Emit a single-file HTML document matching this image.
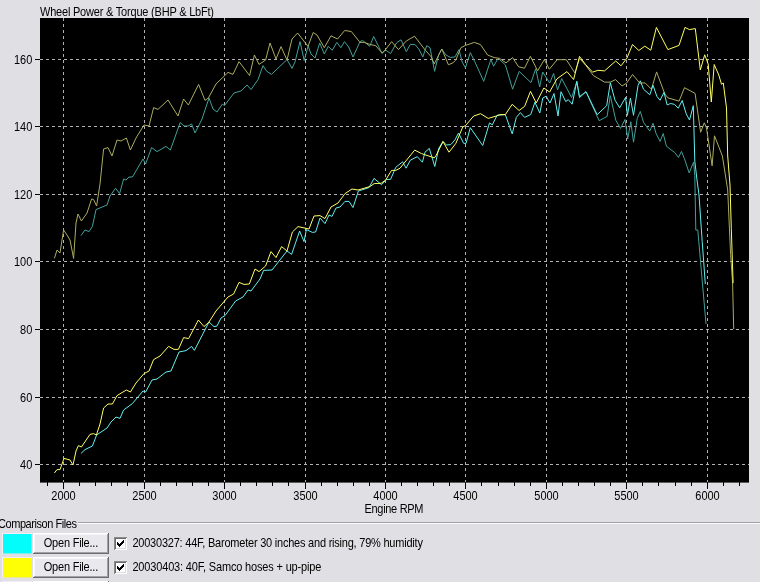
<!DOCTYPE html>
<html><head><meta charset="utf-8"><title>Wheel Power &amp; Torque</title>
<style>
html,body{margin:0;padding:0;}
body{width:760px;height:582px;overflow:hidden;background:#e0dfe3;}
svg{display:block;will-change:transform;}
svg text{font-family:"Liberation Sans",sans-serif;font-size:11px;fill:#000;}
</style></head><body>
<svg width="760" height="582" viewBox="0 0 760 582">
<rect x="40" y="18" width="709" height="464.6" fill="#000"/>
<g stroke="#b4b0b2" stroke-width="1" stroke-dasharray="3 3" fill="none" shape-rendering="crispEdges">
<line x1="63.5" y1="18" x2="63.5" y2="482.5"/>
<line x1="144.5" y1="18" x2="144.5" y2="482.5"/>
<line x1="224.5" y1="18" x2="224.5" y2="482.5"/>
<line x1="305.5" y1="18" x2="305.5" y2="482.5"/>
<line x1="385.5" y1="18" x2="385.5" y2="482.5"/>
<line x1="465.5" y1="18" x2="465.5" y2="482.5"/>
<line x1="546.5" y1="18" x2="546.5" y2="482.5"/>
<line x1="626.5" y1="18" x2="626.5" y2="482.5"/>
<line x1="707.5" y1="18" x2="707.5" y2="482.5"/>
<line x1="40" y1="59.5" x2="749" y2="59.5"/>
<line x1="40" y1="126.5" x2="749" y2="126.5"/>
<line x1="40" y1="194.5" x2="749" y2="194.5"/>
<line x1="40" y1="261.5" x2="749" y2="261.5"/>
<line x1="40" y1="329.5" x2="749" y2="329.5"/>
<line x1="40" y1="397.5" x2="749" y2="397.5"/>
<line x1="40" y1="464.5" x2="749" y2="464.5"/>
</g>
<g fill="#000" shape-rendering="crispEdges">
<rect x="47" y="482" width="1" height="3.7"/>
<rect x="63" y="482" width="1" height="6.7"/>
<rect x="79" y="482" width="1" height="3.7"/>
<rect x="95" y="482" width="1" height="3.7"/>
<rect x="111" y="482" width="1" height="3.7"/>
<rect x="127" y="482" width="1" height="3.7"/>
<rect x="144" y="482" width="1" height="6.7"/>
<rect x="160" y="482" width="1" height="3.7"/>
<rect x="176" y="482" width="1" height="3.7"/>
<rect x="192" y="482" width="1" height="3.7"/>
<rect x="208" y="482" width="1" height="3.7"/>
<rect x="224" y="482" width="1" height="6.7"/>
<rect x="240" y="482" width="1" height="3.7"/>
<rect x="256" y="482" width="1" height="3.7"/>
<rect x="272" y="482" width="1" height="3.7"/>
<rect x="288" y="482" width="1" height="3.7"/>
<rect x="305" y="482" width="1" height="6.7"/>
<rect x="321" y="482" width="1" height="3.7"/>
<rect x="337" y="482" width="1" height="3.7"/>
<rect x="353" y="482" width="1" height="3.7"/>
<rect x="369" y="482" width="1" height="3.7"/>
<rect x="385" y="482" width="1" height="6.7"/>
<rect x="401" y="482" width="1" height="3.7"/>
<rect x="417" y="482" width="1" height="3.7"/>
<rect x="433" y="482" width="1" height="3.7"/>
<rect x="449" y="482" width="1" height="3.7"/>
<rect x="465" y="482" width="1" height="6.7"/>
<rect x="481" y="482" width="1" height="3.7"/>
<rect x="498" y="482" width="1" height="3.7"/>
<rect x="514" y="482" width="1" height="3.7"/>
<rect x="530" y="482" width="1" height="3.7"/>
<rect x="546" y="482" width="1" height="6.7"/>
<rect x="562" y="482" width="1" height="3.7"/>
<rect x="578" y="482" width="1" height="3.7"/>
<rect x="594" y="482" width="1" height="3.7"/>
<rect x="610" y="482" width="1" height="3.7"/>
<rect x="626" y="482" width="1" height="6.7"/>
<rect x="642" y="482" width="1" height="3.7"/>
<rect x="658" y="482" width="1" height="3.7"/>
<rect x="675" y="482" width="1" height="3.7"/>
<rect x="691" y="482" width="1" height="3.7"/>
<rect x="707" y="482" width="1" height="6.7"/>
<rect x="723" y="482" width="1" height="3.7"/>
<rect x="739" y="482" width="1" height="3.7"/>
<rect x="35" y="59" width="5" height="1"/>
<rect x="35" y="126" width="5" height="1"/>
<rect x="35" y="194" width="5" height="1"/>
<rect x="35" y="261" width="5" height="1"/>
<rect x="35" y="329" width="5" height="1"/>
<rect x="35" y="397" width="5" height="1"/>
<rect x="35" y="464" width="5" height="1"/>
</g>
<g>
<text transform="translate(63.5,500) scale(1,1.125)" text-anchor="middle">2000</text>
<text transform="translate(144.5,500) scale(1,1.125)" text-anchor="middle">2500</text>
<text transform="translate(224.5,500) scale(1,1.125)" text-anchor="middle">3000</text>
<text transform="translate(305.5,500) scale(1,1.125)" text-anchor="middle">3500</text>
<text transform="translate(385.5,500) scale(1,1.125)" text-anchor="middle">4000</text>
<text transform="translate(465.5,500) scale(1,1.125)" text-anchor="middle">4500</text>
<text transform="translate(546.5,500) scale(1,1.125)" text-anchor="middle">5000</text>
<text transform="translate(626.5,500) scale(1,1.125)" text-anchor="middle">5500</text>
<text transform="translate(707.5,500) scale(1,1.125)" text-anchor="middle">6000</text>
<text transform="translate(32.3,64) scale(1,1.125)" text-anchor="end">160</text>
<text transform="translate(32.3,131) scale(1,1.125)" text-anchor="end">140</text>
<text transform="translate(32.3,199) scale(1,1.125)" text-anchor="end">120</text>
<text transform="translate(32.3,266) scale(1,1.125)" text-anchor="end">100</text>
<text transform="translate(32.3,334) scale(1,1.125)" text-anchor="end">80</text>
<text transform="translate(32.3,402) scale(1,1.125)" text-anchor="end">60</text>
<text transform="translate(32.3,469) scale(1,1.125)" text-anchor="end">40</text>
<text transform="translate(40,16) scale(1,1.125)" textLength="174" lengthAdjust="spacing">Wheel Power &amp; Torque (BHP &amp; LbFt)</text>
<text transform="translate(364.5,513) scale(1,1.125)" textLength="59" lengthAdjust="spacing">Engine RPM</text>
</g>
<g fill="none" stroke-width="1" stroke-linejoin="round">
<polyline stroke="#42a09a" points="81.0,235.6 85.0,230.0 89.0,231.6 92.4,226.4 96.0,209.6 107.0,205.0 110.0,196.0 115.6,188.2 119.6,193.6 123.6,179.0 126.0,180.0 129.0,177.0 132.4,177.0 143.0,159.0 145.6,164.0 151.6,147.6 157.0,151.6 166.0,146.4 170.4,150.0 180.2,122.5 184.0,126.0 188.0,126.0 191.6,124.0 195.0,133.0 202.0,119.0 209.0,98.0 213.0,109.0 217.0,112.0 222.4,104.0 224.4,105.6 234.0,93.0 241.0,91.0 247.0,85.0 251.0,89.6 258.0,79.6 263.0,65.6 266.4,71.0 271.4,74.4 287.0,59.6 292.0,68.4 295.0,62.0 300.0,41.6 304.2,60.5 308.2,45.8 311.0,54.0 315.0,58.0 319.7,43.0 324.3,54.0 328.3,46.3 332.2,50.3 336.8,42.4 340.8,47.7 344.5,41.7 348.7,47.0 353.0,57.0 360.0,41.7 362.5,40.4 369.7,46.3 373.7,36.5 382.2,53.6 385.3,49.8 390.6,53.6 396.4,43.0 401.0,39.8 406.3,51.6 410.3,44.4 414.9,44.4 418.8,49.0 422.8,56.9 426.7,45.7 430.0,47.7 434.6,71.3 438.6,54.9 441.8,49.0 445.8,54.9 450.4,57.5 455.0,56.9 459.0,49.6 462.2,62.1 465.4,67.8 470.3,52.6 474.7,61.5 483.7,81.3 490.9,59.6 493.6,66.2 498.2,58.3 505.4,64.9 512.6,89.2 519.2,71.4 531.0,82.6 535.7,68.8 539.7,87.0 542.7,72.0 549.7,83.0 553.6,73.5 557.5,90.0 561.7,78.6 571.6,97.6 576.8,81.8 579.5,96.3 586.0,91.7 590.0,100.9 599.2,120.7 607.1,116.4 610.3,95.6 615.8,120.3 620.5,128.4 625.0,119.5 627.7,139.0 630.8,121.7 633.5,142.2 637.2,118.5 640.3,111.4 643.5,122.4 649.8,131.1 653.0,123.2 656.1,133.5 660.1,141.4 663.2,133.5 666.4,146.2 670.0,149.0 674.8,152.6 678.4,157.4 681.5,151.4 684.4,158.6 689.2,173.0 693.6,162.0 694.8,175.5 695.8,230.0 697.8,230.0 701.0,267.0 706.0,324.0"/>
<polyline stroke="#acac60" points="54.4,258.4 57.0,250.0 60.0,253.0 63.6,230.0 67.0,235.0 70.0,240.0 73.6,258.4 76.0,223.0 78.0,214.0 81.4,221.0 87.0,213.0 91.6,199.0 93.6,199.6 96.6,206.0 100.0,184.0 103.6,149.0 108.0,147.6 112.0,156.0 117.0,140.0 121.0,141.0 126.4,138.0 130.4,150.0 136.0,138.0 144.0,125.0 149.0,126.0 153.6,107.6 158.0,109.4 168.0,100.0 178.0,116.0 183.6,99.0 188.4,105.0 198.6,84.4 205.0,100.4 208.4,98.0 216.0,84.0 228.0,72.4 233.0,74.4 239.0,61.6 249.6,75.6 254.4,55.0 259.0,64.4 265.6,60.0 270.0,43.0 276.0,59.0 281.0,46.6 287.0,60.0 292.0,39.0 297.6,33.0 308.0,46.3 313.2,32.5 317.0,35.0 324.3,47.7 331.0,35.8 337.5,39.0 344.7,30.5 351.3,31.5 360.0,42.4 364.5,42.4 369.7,44.4 375.7,45.7 382.2,53.0 385.5,49.6 391.6,41.7 398.5,49.6 406.3,41.0 414.5,36.2 425.4,50.3 431.3,56.9 434.2,64.0 441.8,49.0 448.4,64.8 453.0,62.8 455.7,60.2 460.9,47.7 465.5,45.4 474.3,42.4 480.4,44.5 487.6,55.0 494.2,57.6 499.5,58.3 506.0,62.9 512.6,57.6 518.6,66.8 524.5,68.2 530.4,56.3 537.6,70.8 544.4,59.6 549.3,69.2 557.2,59.7 566.3,59.7 574.9,72.9 579.5,58.4 586.0,65.7 593.3,75.5 604.5,82.1 610.4,82.1 615.5,79.6 622.1,86.0 626.5,83.2 632.6,74.5 639.7,83.1 645.1,82.9 651.4,89.2 656.6,71.9 664.8,94.0 668.0,97.9 679.1,101.1 684.5,87.7 695.1,93.4 700.6,132.3 704.3,122.8 706.5,128.0 712.1,165.8 714.5,135.8 722.4,156.0 727.7,190.0 730.6,254.4 732.6,283.0 733.7,329.0"/>
<polyline stroke="#62f0ee" points="81.0,453.4 85.0,449.6 92.4,446.0 96.6,435.0 107.0,428.0 111.0,422.0 116.0,417.0 120.0,418.4 123.6,410.0 132.4,403.6 143.0,391.0 145.6,392.0 152.0,380.0 157.0,379.0 166.0,372.0 171.0,371.0 179.0,352.0 186.0,350.6 191.6,346.4 194.4,350.4 209.0,322.0 214.0,326.6 217.0,326.0 221.0,318.0 225.0,315.6 235.6,301.0 243.0,297.0 248.0,290.0 251.0,291.0 260.0,279.0 263.6,270.4 272.0,270.0 287.0,251.0 291.6,254.4 299.6,231.0 304.0,241.6 306.4,229.6 312.4,232.4 315.6,232.0 320.0,218.0 325.0,223.6 329.0,215.0 332.0,216.4 336.0,208.0 340.0,207.0 345.0,201.4 349.0,201.4 353.0,207.6 358.4,191.0 369.0,187.6 374.0,178.4 381.5,184.7 386.5,179.5 390.6,179.3 395.8,167.3 402.6,161.8 406.1,168.2 410.4,160.1 417.3,156.7 422.4,162.2 425.0,152.2 429.3,148.4 434.8,166.5 438.7,148.4 443.0,141.5 446.5,145.0 450.8,144.6 455.0,139.8 458.5,133.0 463.6,143.3 466.0,143.4 470.3,127.7 482.7,145.5 489.5,122.9 492.3,124.9 497.1,115.3 505.3,114.6 512.2,133.9 516.3,117.4 520.4,112.6 524.6,117.4 530.7,114.6 534.9,102.3 539.8,113.0 542.8,98.0 546.2,96.2 550.0,103.0 554.0,93.5 558.0,116.0 561.0,91.7 565.7,101.6 568.3,99.6 572.2,104.2 576.8,81.2 579.5,97.6 586.0,91.7 597.2,114.7 606.7,105.6 610.3,82.7 615.0,100.2 619.7,107.8 625.6,97.4 627.4,115.3 630.4,98.1 633.5,115.3 638.0,85.5 640.3,80.8 643.5,89.2 649.8,94.8 653.0,85.3 656.9,96.4 660.0,100.3 664.0,92.4 667.2,105.0 670.4,103.5 674.3,104.3 678.3,108.2 682.2,100.5 686.2,113.8 689.5,120.0 693.3,105.7 694.8,161.0 697.0,180.0 699.0,195.0 702.2,241.5 705.3,284.0"/>
<polyline stroke="#ffff62" points="54.4,473.0 57.0,469.6 60.0,469.6 64.0,458.4 70.0,460.0 73.0,465.0 76.0,451.0 78.4,445.6 81.4,447.0 90.0,434.4 93.6,433.6 96.4,435.0 100.0,424.0 103.6,408.0 108.0,404.0 112.4,404.0 117.0,395.6 126.4,390.0 130.4,392.0 136.0,383.0 144.0,373.6 149.0,371.0 153.6,359.6 160.0,356.0 168.6,346.4 174.0,349.4 178.4,349.4 183.6,337.6 188.6,338.6 198.4,320.0 204.0,326.6 209.0,322.0 216.0,311.0 228.0,297.0 233.6,294.0 239.0,282.4 244.0,284.4 249.3,284.0 255.0,269.0 259.0,271.6 265.6,266.0 271.0,251.6 276.0,257.6 281.6,246.6 287.0,251.0 292.4,232.0 298.0,226.6 309.0,229.0 314.0,216.0 320.0,215.6 325.0,218.6 331.0,207.0 338.0,203.0 345.0,193.6 352.0,189.0 358.0,190.0 363.0,188.6 370.0,186.5 374.2,183.6 381.1,183.3 385.7,180.0 391.5,170.4 395.8,170.4 400.0,168.2 414.7,150.1 421.5,153.6 434.4,157.9 436.2,155.3 443.0,141.5 449.0,152.2 455.9,143.3 462.8,126.9 465.5,125.6 473.7,116.0 480.6,113.7 488.2,118.4 496.4,116.0 499.8,114.6 505.3,114.6 512.2,104.3 519.1,110.5 524.6,106.4 530.5,91.3 536.2,103.0 543.9,88.0 549.6,92.0 556.9,78.9 567.0,71.6 573.6,79.5 579.5,56.4 585.4,64.3 592.6,72.2 597.9,70.3 604.5,70.9 615.7,61.0 621.0,65.8 627.0,58.0 632.5,44.5 638.8,50.5 644.8,46.2 650.8,50.2 656.4,27.4 667.9,49.6 679.0,45.4 685.0,27.4 689.3,29.6 695.3,28.6 700.3,70.0 704.7,54.8 708.2,64.0 711.3,102.0 714.2,64.5 718.8,75.0 721.5,84.3 723.3,83.0 726.5,108.0 727.7,156.0 730.0,185.0 731.3,228.7 733.1,283.0"/>
</g>
<g shape-rendering="crispEdges">
<rect x="77.5" y="522" width="683" height="1" fill="#a0a0a6"/>
<rect x="77.5" y="523" width="683" height="1" fill="#fbfbfd"/>
</g>
<text transform="translate(-2,528) scale(1,1.125)" textLength="79" lengthAdjust="spacing">Comparison Files</text>
<g transform="translate(2,533)"><path d="M0 0h30v1h-29v20h-1z" fill="#f0eff6" shape-rendering="crispEdges"/><rect x="1" y="1" width="28.6" height="19.4" fill="#02fdfb"/></g>
<g transform="translate(33,533)" shape-rendering="crispEdges"><rect x="0" y="0" width="76" height="21" fill="#e9e9ed"/><path d="M0 0h76v1h-75v20h-1z" fill="#fff"/><path d="M1 1h74v1h-73v18h-1z" fill="#f6f6f8"/><path d="M75 0h1v21h-76v-1h75z" fill="#6c6c70"/><path d="M74 1h1v19h-74v-1h73z" fill="#a2a2a6"/></g><text transform="translate(71.0,547) scale(1,1.125)" text-anchor="middle" textLength="54.5" lengthAdjust="spacing">Open File...</text>
<g transform="translate(114,537)" shape-rendering="crispEdges"><rect x="0" y="0" width="13" height="13" fill="#fff"/><path d="M0 0h13v1h-12v12h-1z" fill="#8a8a8a"/><path d="M1 1h11v1h-10v10h-1z" fill="#6a6a6a"/><path d="M12 1h1v12h-12v-1h11z" fill="#fff"/><path d="M11 2h1v10h-10v-1h9z" fill="#dcdce0"/><path d="M3 5h1v3h-1zM4 6h1v3h-1zM5 7h1v3h-1zM6 6h1v3h-1zM7 5h1v3h-1zM8 4h1v3h-1zM9 3h1v3h-1z" fill="#000"/></g>
<text transform="translate(132.4,547) scale(1,1.125)" textLength="290.5" lengthAdjust="spacing">20030327: 44F, Barometer 30 inches and rising, 79% humidity</text>
<g transform="translate(2,557)"><path d="M0 0h30v1h-29v20h-1z" fill="#f0eff6" shape-rendering="crispEdges"/><rect x="1" y="1" width="28.6" height="19.4" fill="#fefe04"/></g>
<g transform="translate(33,557)" shape-rendering="crispEdges"><rect x="0" y="0" width="76" height="21" fill="#e9e9ed"/><path d="M0 0h76v1h-75v20h-1z" fill="#fff"/><path d="M1 1h74v1h-73v18h-1z" fill="#f6f6f8"/><path d="M75 0h1v21h-76v-1h75z" fill="#6c6c70"/><path d="M74 1h1v19h-74v-1h73z" fill="#a2a2a6"/></g><text transform="translate(71.0,571) scale(1,1.125)" text-anchor="middle" textLength="54.5" lengthAdjust="spacing">Open File...</text>
<g transform="translate(114,561)" shape-rendering="crispEdges"><rect x="0" y="0" width="13" height="13" fill="#fff"/><path d="M0 0h13v1h-12v12h-1z" fill="#8a8a8a"/><path d="M1 1h11v1h-10v10h-1z" fill="#6a6a6a"/><path d="M12 1h1v12h-12v-1h11z" fill="#fff"/><path d="M11 2h1v10h-10v-1h9z" fill="#dcdce0"/><path d="M3 5h1v3h-1zM4 6h1v3h-1zM5 7h1v3h-1zM6 6h1v3h-1zM7 5h1v3h-1zM8 4h1v3h-1zM9 3h1v3h-1z" fill="#000"/></g>
<text transform="translate(132.4,571) scale(1,1.125)" textLength="189" lengthAdjust="spacing">20030403: 40F, Samco hoses + up-pipe</text>
<g transform="translate(2,581)"><path d="M0 0h30v1h-29v20h-1z" fill="#f0eff6" shape-rendering="crispEdges"/><rect x="1" y="1" width="28.6" height="19.4" fill="#ffffff"/></g>
<g transform="translate(33,581)" shape-rendering="crispEdges"><rect x="0" y="0" width="76" height="21" fill="#e9e9ed"/><path d="M0 0h76v1h-75v20h-1z" fill="#fff"/><path d="M1 1h74v1h-73v18h-1z" fill="#f6f6f8"/><path d="M75 0h1v21h-76v-1h75z" fill="#6c6c70"/><path d="M74 1h1v19h-74v-1h73z" fill="#a2a2a6"/></g>
</svg>
</body></html>
